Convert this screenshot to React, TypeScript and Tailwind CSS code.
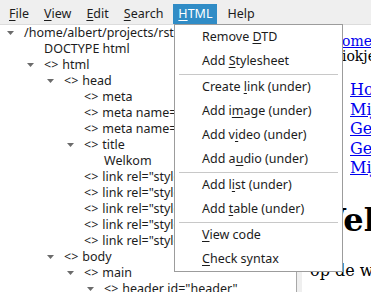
import React from 'react'

type Row = { depth: number; arrow?: boolean; tag?: boolean; text: string }

const ROWS: Row[] = [
  { depth: 0, arrow: true, text: '/home/albert/projects/rst2html/website/source/index.html' },
  { depth: 1, text: 'DOCTYPE html' },
  { depth: 1, arrow: true, tag: true, text: 'html' },
  { depth: 2, arrow: true, tag: true, text: 'head' },
  { depth: 3, tag: true, text: 'meta' },
  { depth: 3, tag: true, text: 'meta name="viewport" content="width=device-width"' },
  { depth: 3, tag: true, text: 'meta name="description" content="Welkom"' },
  { depth: 3, arrow: true, tag: true, text: 'title' },
  { depth: 4, text: 'Welkom' },
  { depth: 3, tag: true, text: 'link rel="stylesheet" href="css/reset.css"' },
  { depth: 3, tag: true, text: 'link rel="stylesheet" href="css/base.css"' },
  { depth: 3, tag: true, text: 'link rel="stylesheet" href="css/layout.css"' },
  { depth: 3, tag: true, text: 'link rel="stylesheet" href="css/menu.css"' },
  { depth: 3, tag: true, text: 'link rel="stylesheet" href="css/print.css"' },
  { depth: 2, arrow: true, tag: true, text: 'body' },
  { depth: 3, arrow: true, tag: true, text: 'main' },
  { depth: 4, arrow: true, tag: true, text: 'header id="header"' },
]

const MENUBAR = ['File', 'View', 'Edit', 'Search', 'HTML', 'Help']

// label split as [before, mnemonic, after]
const MENU: ([string, string, string] | null)[] = [
  ['Remove ', 'D', 'TD'],
  ['Add ', 'S', 'tylesheet'],
  null,
  ['Create ', 'l', 'ink (under)'],
  ['Add i', 'm', 'age (under)'],
  ['Add v', 'i', 'deo (under)'],
  ['Add a', 'u', 'dio (under)'],
  null,
  ['Add l', 'i', 'st (under)'],
  ['Add ', 't', 'able (under)'],
  null,
  ['', 'V', 'iew code'],
  ['', 'C', 'heck syntax'],
]

function Arrow() {
  return (
    <svg width="7" height="4" viewBox="0 0 7 4" className="ml-[7px]">
      <path d="M0 0 H7 L3.5 4 Z" fill="#6b6b6b" />
    </svg>
  )
}

export default function App() {
  return (
    <div
      className="relative w-[371px] h-[292px] overflow-hidden bg-white text-[12.5px] text-[#1c1c1c]"
      style={{ fontFamily: '"Noto Sans", sans-serif' }}
    >
      {/* Menu bar */}
      <div className="flex h-6 bg-[#efefef] pl-[4px] gap-[5px]">
        {MENUBAR.map((m) => (
          <div
            key={m}
            className={`mt-1 h-5 px-[5px] flex items-center leading-none ${
              m === 'HTML' ? 'bg-[#308cc6] text-white' : ''
            }`}
          >
            {m === 'Help' ? (
              <span>{m}</span>
            ) : (
              <span>
                <span className="underline underline-offset-2">{m[0]}</span>
                {m.slice(1)}
              </span>
            )}
          </div>
        ))}
      </div>

      <div className="flex h-[268px] border-t border-[#dcdcdc]">
        {/* Tree */}
        <div className="w-[297px] shrink-0 overflow-hidden border-r border-[#a8a8a8]">
          {ROWS.map((r, i) => (
            <div
              key={i}
              className="flex items-center h-4 whitespace-nowrap leading-none"
              style={{ paddingLeft: r.depth * 20 }}
            >
              <div className="w-6 shrink-0 flex items-center">{r.arrow && <Arrow />}</div>
              <span>
                {r.tag && <span className="mr-[4px]">&lt;&gt;</span>}
                {r.text}
              </span>
            </div>
          ))}
        </div>

        {/* Splitter */}
        <div className="w-[5px] shrink-0 bg-[#efefef]" />

        {/* Web view */}
        <div
          className="flex-1 overflow-hidden bg-white text-black pl-2 pt-[9px]"
          style={{ fontFamily: '"DejaVu Serif", serif' }}
        >
          <div className="whitespace-nowrap text-[14px] leading-[15px] pl-[23px]">
            <a className="text-[#0000ee] underline">homepage</a>
          </div>
          <div className="whitespace-nowrap text-[14px] leading-[15px] pl-[23px]">giokjes</div>
          <ul className="mt-4 pl-10 text-[16px] leading-[19.5px] whitespace-nowrap">
            <li><a className="text-[#0000ee] underline">Home</a></li>
            <li><a className="text-[#0000ee] underline">Mijn werk</a></li>
            <li><a className="text-[#0000ee] underline">Gedichten</a></li>
            <li><a className="text-[#0000ee] underline">Gedachten</a></li>
            <li><a className="text-[#0000ee] underline">Mijn links</a></li>
          </ul>
          <h1 className="mt-[24px] text-[32px] leading-[37px] font-bold whitespace-nowrap">Welkom</h1>
          <p className="mt-[22px] text-[16px] leading-[19px] whitespace-nowrap">op de website</p>
        </div>
      </div>

      {/* HTML menu popup */}
      <div className="absolute left-[174px] top-6 w-[169px] bg-white border border-[#9c9c9c]">
        {MENU.map((item, i) =>
          item ? (
            <div key={i} className="h-6 flex items-center pl-[27px] whitespace-nowrap leading-none">
              <span>
                {item[0]}
                <span className="underline underline-offset-2">{item[1]}</span>
                {item[2]}
              </span>
            </div>
          ) : (
            <div key={i} className="h-px mt-px mx-[4px] bg-[#c8c8c8]" />
          )
        )}
      </div>
    </div>
  )
}
